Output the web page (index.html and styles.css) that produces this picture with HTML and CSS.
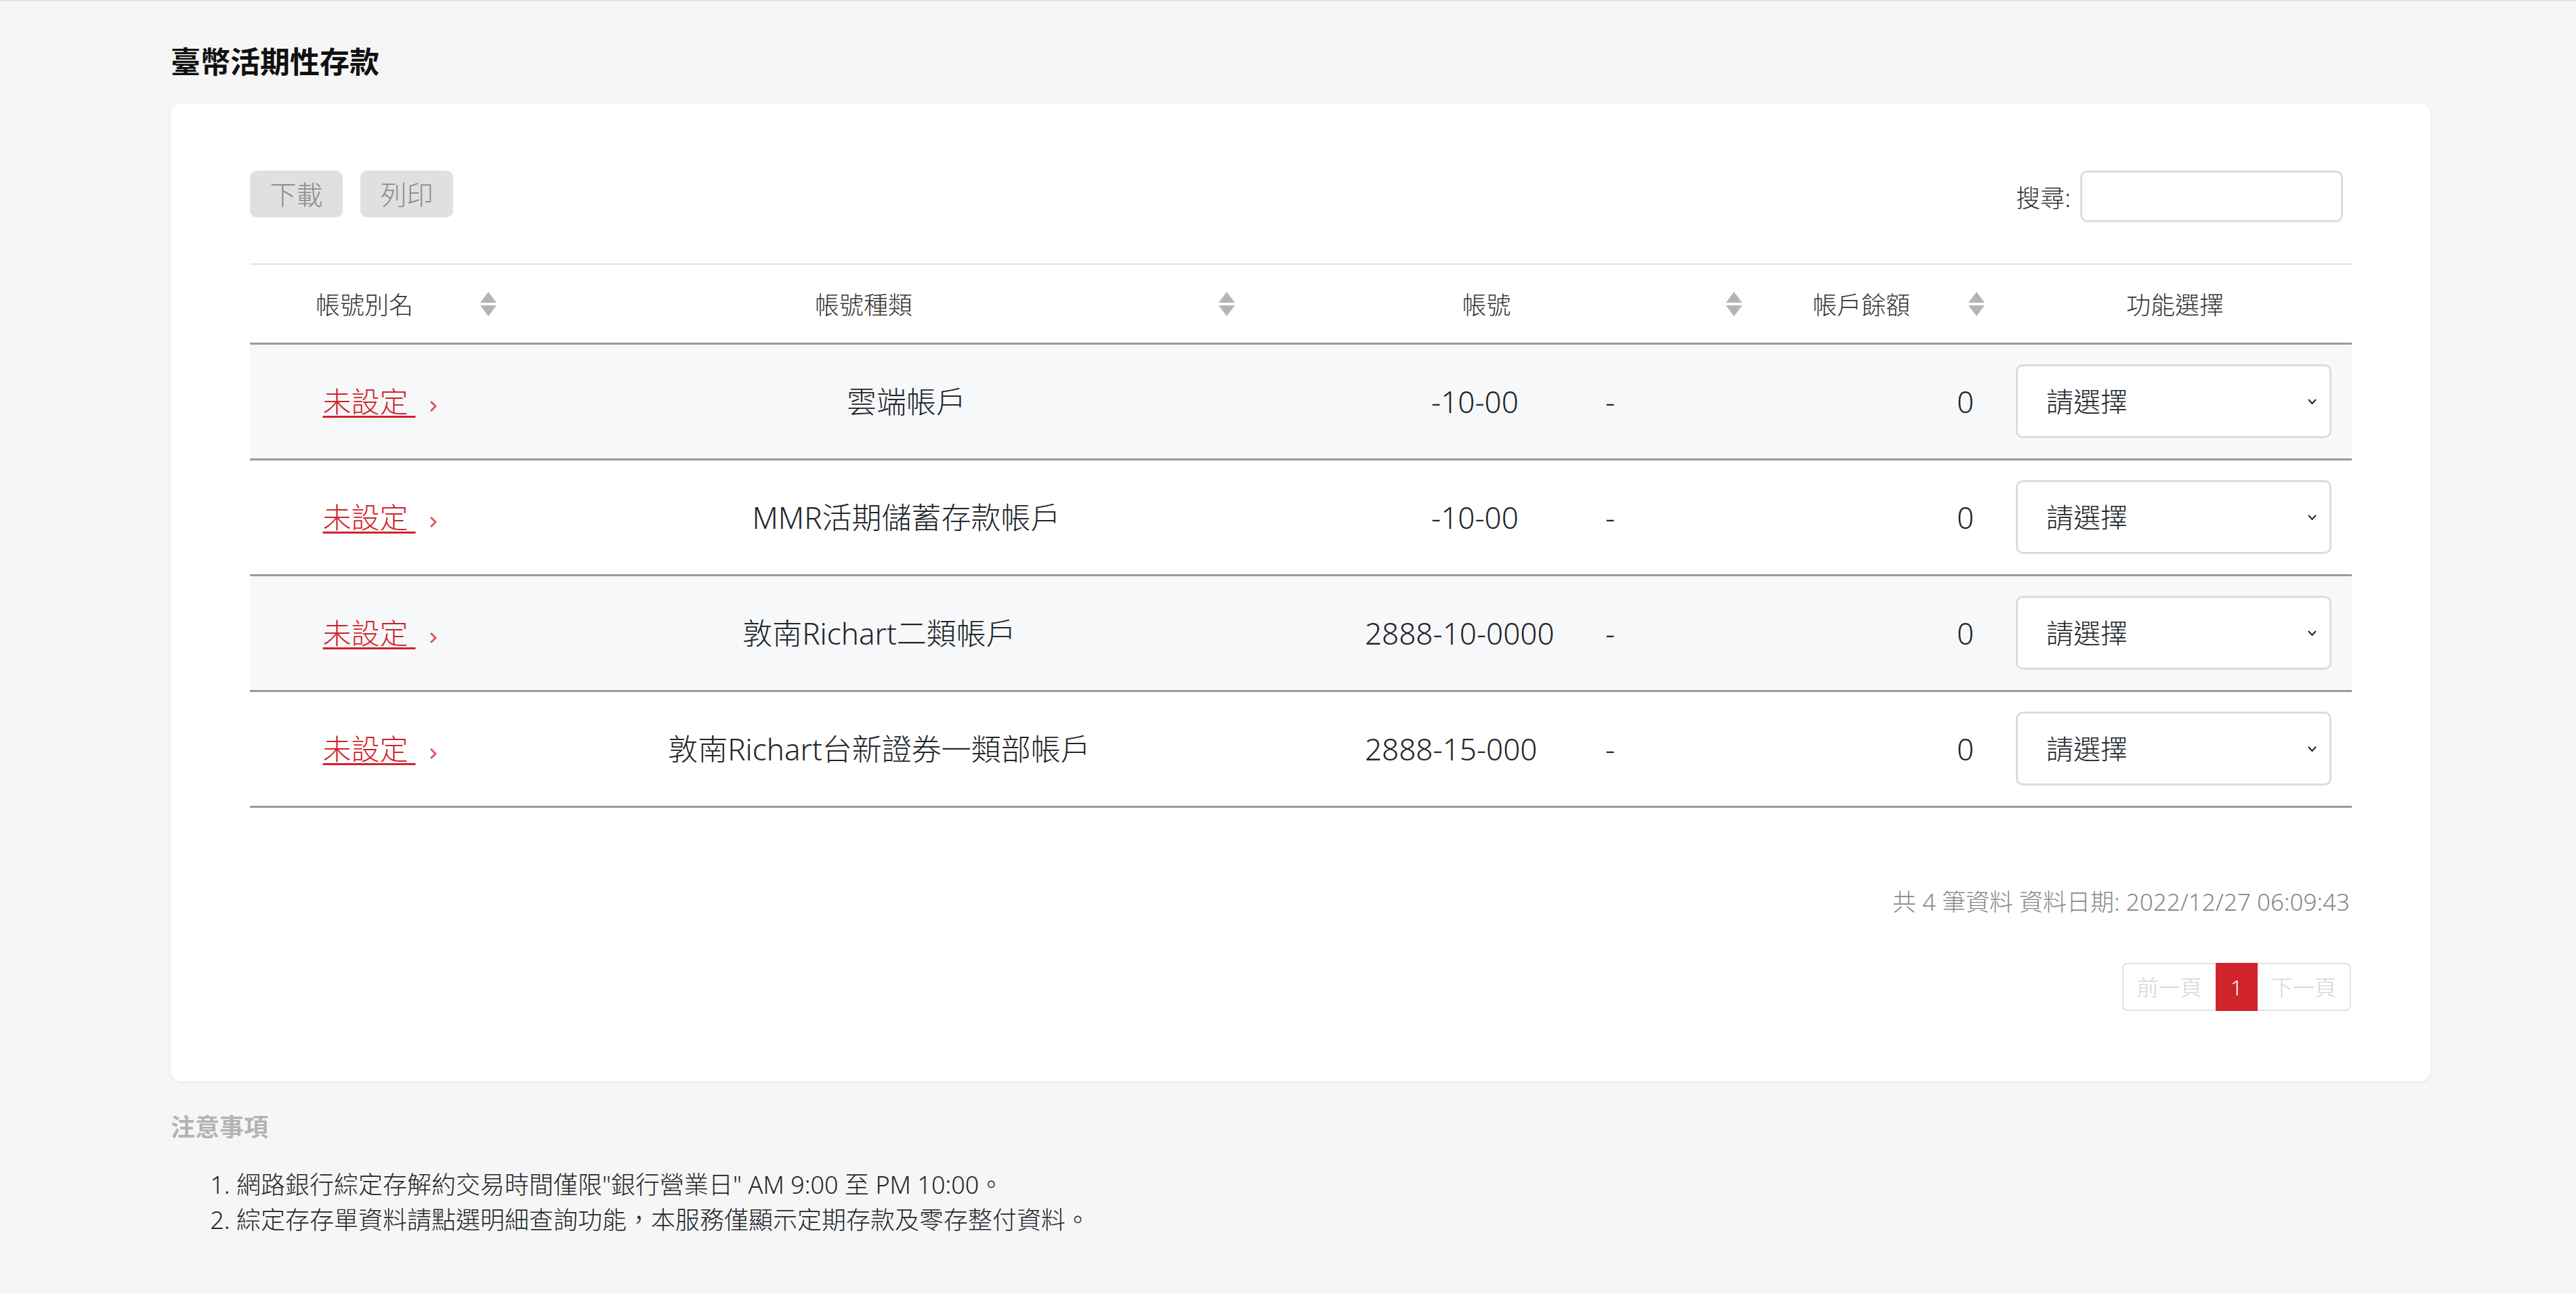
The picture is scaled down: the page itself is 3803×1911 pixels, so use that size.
FILE: index.html
```html
<!DOCTYPE html>
<html lang="zh-Hant">
<head>
    <meta charset="UTF-8">
    <meta name="viewport" content="width=device-width, initial-scale=1.0">
    <title>臺幣活期性存款</title>
    <link rel="stylesheet" href="styles.css">
</head>
<body>

<div class="page">
    <h1 class="page-title">臺幣活期性存款</h1>

    <div class="card">
        <div class="toolbar">
            <div class="tools">
                <button class="btn-tool">下載</button>
                <button class="btn-tool">列印</button>
            </div>
            <label class="search">搜尋:<input type="text"></label>
        </div>

        <table class="accounts">
            <colgroup>
                <col class="col-alias">
                <col class="col-type">
                <col class="col-no">
                <col class="col-balance">
                <col class="col-action">
            </colgroup>
            <thead>
                <tr>
                    <th class="sortable">帳號別名<span class="sort-icon"><svg width="24" height="36" viewBox="0 0 24 36"><polygon points="12,0 24,16 0,16"/><polygon points="0,20 24,20 12,36"/></svg></span></th>
                    <th class="sortable">帳號種類<span class="sort-icon"><svg width="24" height="36" viewBox="0 0 24 36"><polygon points="12,0 24,16 0,16"/><polygon points="0,20 24,20 12,36"/></svg></span></th>
                    <th class="sortable">帳號<span class="sort-icon"><svg width="24" height="36" viewBox="0 0 24 36"><polygon points="12,0 24,16 0,16"/><polygon points="0,20 24,20 12,36"/></svg></span></th>
                    <th class="sortable">帳戶餘額<span class="sort-icon"><svg width="24" height="36" viewBox="0 0 24 36"><polygon points="12,0 24,16 0,16"/><polygon points="0,20 24,20 12,36"/></svg></span></th>
                    <th>功能選擇</th>
                </tr>
            </thead>
            <tbody>
                <tr>
                    <td class="alias"><a href="#">未設定&nbsp;</a><svg class="arrow" width="11" height="18" viewBox="0 0 11 18"><path d="M2 2 L9 9 L2 16"/></svg></td>
                    <td class="type type-shift">雲端帳戶</td>
                    <td class="acct-cell"><span class="acct masked">-10-00</span>-</td>
                    <td class="balance">0</td>
                    <td class="action"><div class="select-wrap"><select><option>請選擇</option></select><svg class="caret" width="13" height="9" viewBox="0 0 13 9"><path d="M1 1.5 L6.5 7.5 L12 1.5"/></svg></div></td>
                </tr>
                <tr>
                    <td class="alias"><a href="#">未設定&nbsp;</a><svg class="arrow" width="11" height="18" viewBox="0 0 11 18"><path d="M2 2 L9 9 L2 16"/></svg></td>
                    <td class="type type-shift">MMR活期儲蓄存款帳戶</td>
                    <td class="acct-cell"><span class="acct masked">-10-00</span>-</td>
                    <td class="balance">0</td>
                    <td class="action"><div class="select-wrap"><select><option>請選擇</option></select><svg class="caret" width="13" height="9" viewBox="0 0 13 9"><path d="M1 1.5 L6.5 7.5 L12 1.5"/></svg></div></td>
                </tr>
                <tr>
                    <td class="alias"><a href="#">未設定&nbsp;</a><svg class="arrow" width="11" height="18" viewBox="0 0 11 18"><path d="M2 2 L9 9 L2 16"/></svg></td>
                    <td class="type">敦南Richart二類帳戶</td>
                    <td class="acct-cell"><span class="acct">2888-10-0000</span>-</td>
                    <td class="balance">0</td>
                    <td class="action"><div class="select-wrap"><select><option>請選擇</option></select><svg class="caret" width="13" height="9" viewBox="0 0 13 9"><path d="M1 1.5 L6.5 7.5 L12 1.5"/></svg></div></td>
                </tr>
                <tr>
                    <td class="alias"><a href="#">未設定&nbsp;</a><svg class="arrow" width="11" height="18" viewBox="0 0 11 18"><path d="M2 2 L9 9 L2 16"/></svg></td>
                    <td class="type">敦南Richart台新證券一類部帳戶</td>
                    <td class="acct-cell"><span class="acct">2888-15-000</span>-</td>
                    <td class="balance">0</td>
                    <td class="action"><div class="select-wrap"><select><option>請選擇</option></select><svg class="caret" width="13" height="9" viewBox="0 0 13 9"><path d="M1 1.5 L6.5 7.5 L12 1.5"/></svg></div></td>
                </tr>
            </tbody>
        </table>

        <div class="info">共 4 筆資料 資料日期: 2022/12/27 06:09:43</div>

        <div class="pager">
            <div class="pager-group">
                <a class="page-btn disabled">前一頁</a>
                <a class="page-btn current">1</a>
                <a class="page-btn disabled">下一頁</a>
            </div>
        </div>
    </div>

    <div class="notes">
        <h3>注意事項</h3>
        <ol>
            <li>網路銀行綜定存解約交易時間僅限"銀行營業日" AM 9:00 至 PM 10:00。</li>
            <li>綜定存存單資料請點選明細查詢功能，本服務僅顯示定期存款及零存整付資料。</li>
        </ol>
    </div>
</div>

</body>
</html>
```

FILE: styles.css
```css
body {
    margin: 0;
    background-color: #f6f6f6;
    border-top: 2px solid #e3e3e3;
    font-family: "Noto Sans", "Noto Sans CJK TC", sans-serif;
    font-weight: 300;
    color: #212529;
}
.page {
    padding: 0 215px 40px 252px;
}
.page-title {
    margin: 56px 0 29px;
    font-size: 44px;
    line-height: 66px;
    font-weight: 700;
    color: #111;
}
.card {
    background: #fff;
    border-radius: 16px;
    box-shadow: 0 2px 5px rgba(0, 0, 0, 0.06);
    padding: 99px 116px 104px 117px;
}
.toolbar {
    display: flex;
    justify-content: space-between;
    align-items: flex-start;
    margin-bottom: 61px;
}
.tools {
    display: flex;
    gap: 26px;
}
.btn-tool {
    width: 137px;
    height: 69px;
    padding: 0;
    border: none;
    border-radius: 10px;
    background-color: #e0e0e0;
    color: #8c8c8c;
    font-family: inherit;
    font-weight: 300;
    font-size: 39px;
    line-height: 69px;
}
.search {
    display: flex;
    align-items: center;
    margin-right: 13px;
    font-size: 36px;
    color: #333;
}
.search input {
    width: 388px;
    height: 76px;
    margin-left: 14px;
    box-sizing: border-box;
    border: 3px solid #dcdcdc;
    border-radius: 10px;
    outline: none;
}

/* table */
.accounts {
    width: 100%;
    border-collapse: collapse;
    table-layout: fixed;
    border-top: 2px solid #e0e0e0;
}
.col-alias { width: 384px; }
.col-type { width: 1090px; }
.col-no { width: 749px; }
.col-balance { width: 358px; }
.col-action { width: 522px; }
.accounts th {
    position: relative;
    height: 115px;
    padding: 0 24px;
    border-bottom: 3px solid #999;
    font-size: 36px;
    font-weight: 300;
    color: #333;
    text-align: center;
}
.accounts th.sortable {
    padding-right: 70px;
}
.sort-icon {
    position: absolute;
    right: 20px;
    top: 50%;
    transform: translateY(-50%);
    line-height: 0;
}
.sort-icon svg {
    fill: #b4b4b4;
}
.accounts td {
    padding: 29px 24px 30px;
    border-bottom: 3px solid #999;
    font-size: 44px;
    line-height: 60px;
    vertical-align: middle;
}
.accounts tbody tr:nth-child(odd) {
    background-color: #f7f8fa;
}
.alias {
    text-align: center;
}
.alias a {
    font-size: 42px;
    color: #d0232a;
    text-decoration: underline;
    text-decoration-thickness: 3px;
    text-underline-offset: 5px;
}
.arrow {
    margin-left: 21px;
    vertical-align: 0;
}
.arrow path {
    fill: none;
    stroke: #d0232a;
    stroke-width: 3;
    opacity: 0.75;
}
.type {
    text-align: center;
}
.type-shift {
    padding-left: 104px !important;
}
.acct-cell {
    padding-left: 172px !important;
    white-space: nowrap;
}
.acct {
    display: inline-block;
    width: 355px;
    box-sizing: border-box;
}
.acct.masked {
    padding-left: 98px;
}
.balance {
    text-align: right;
    padding-right: 36px !important;
}
.action {
    padding-left: 26px !important;
    padding-right: 30px !important;
}
.select-wrap {
    position: relative;
}
.select-wrap select {
    -webkit-appearance: none;
    appearance: none;
    width: 466px;
    height: 109px;
    padding: 0 0 0 42px;
    border: 3px solid #dcdcdc;
    border-radius: 10px;
    background: #fff;
    color: #212529;
    font-family: inherit;
    font-weight: 300;
    font-size: 40px;
    outline: none;
}
.caret {
    position: absolute;
    right: 22px;
    top: 50%;
    transform: translateY(-50%);
}
.caret path {
    fill: none;
    stroke: #222;
    stroke-width: 2;
}

/* footer of card */
.info {
    margin-top: 112px;
    margin-right: 3px;
    text-align: right;
    font-size: 35px;
    line-height: 54px;
    color: #888;
}
.pager {
    display: flex;
    justify-content: flex-end;
    margin-top: 63px;
    margin-right: 1px;
}
.pager-group {
    display: flex;
    border: 2px solid #dee2e6;
    border-radius: 8px;
}
.page-btn {
    padding: 0 20px;
    font-size: 32px;
    line-height: 67px;
    color: #d4d4d4;
}
.page-btn.current {
    margin: -2px 0;
    padding: 2px 22px;
    background-color: #d0232a;
    color: #fff;
}

/* notes */
.notes h3 {
    margin: 41px 0 32px;
    font-size: 36px;
    line-height: 54px;
    font-weight: 700;
    color: #b3b3b3;
}
.notes ol {
    margin: 0;
    padding-left: 97px;
    font-size: 36px;
    line-height: 52px;
}
```
